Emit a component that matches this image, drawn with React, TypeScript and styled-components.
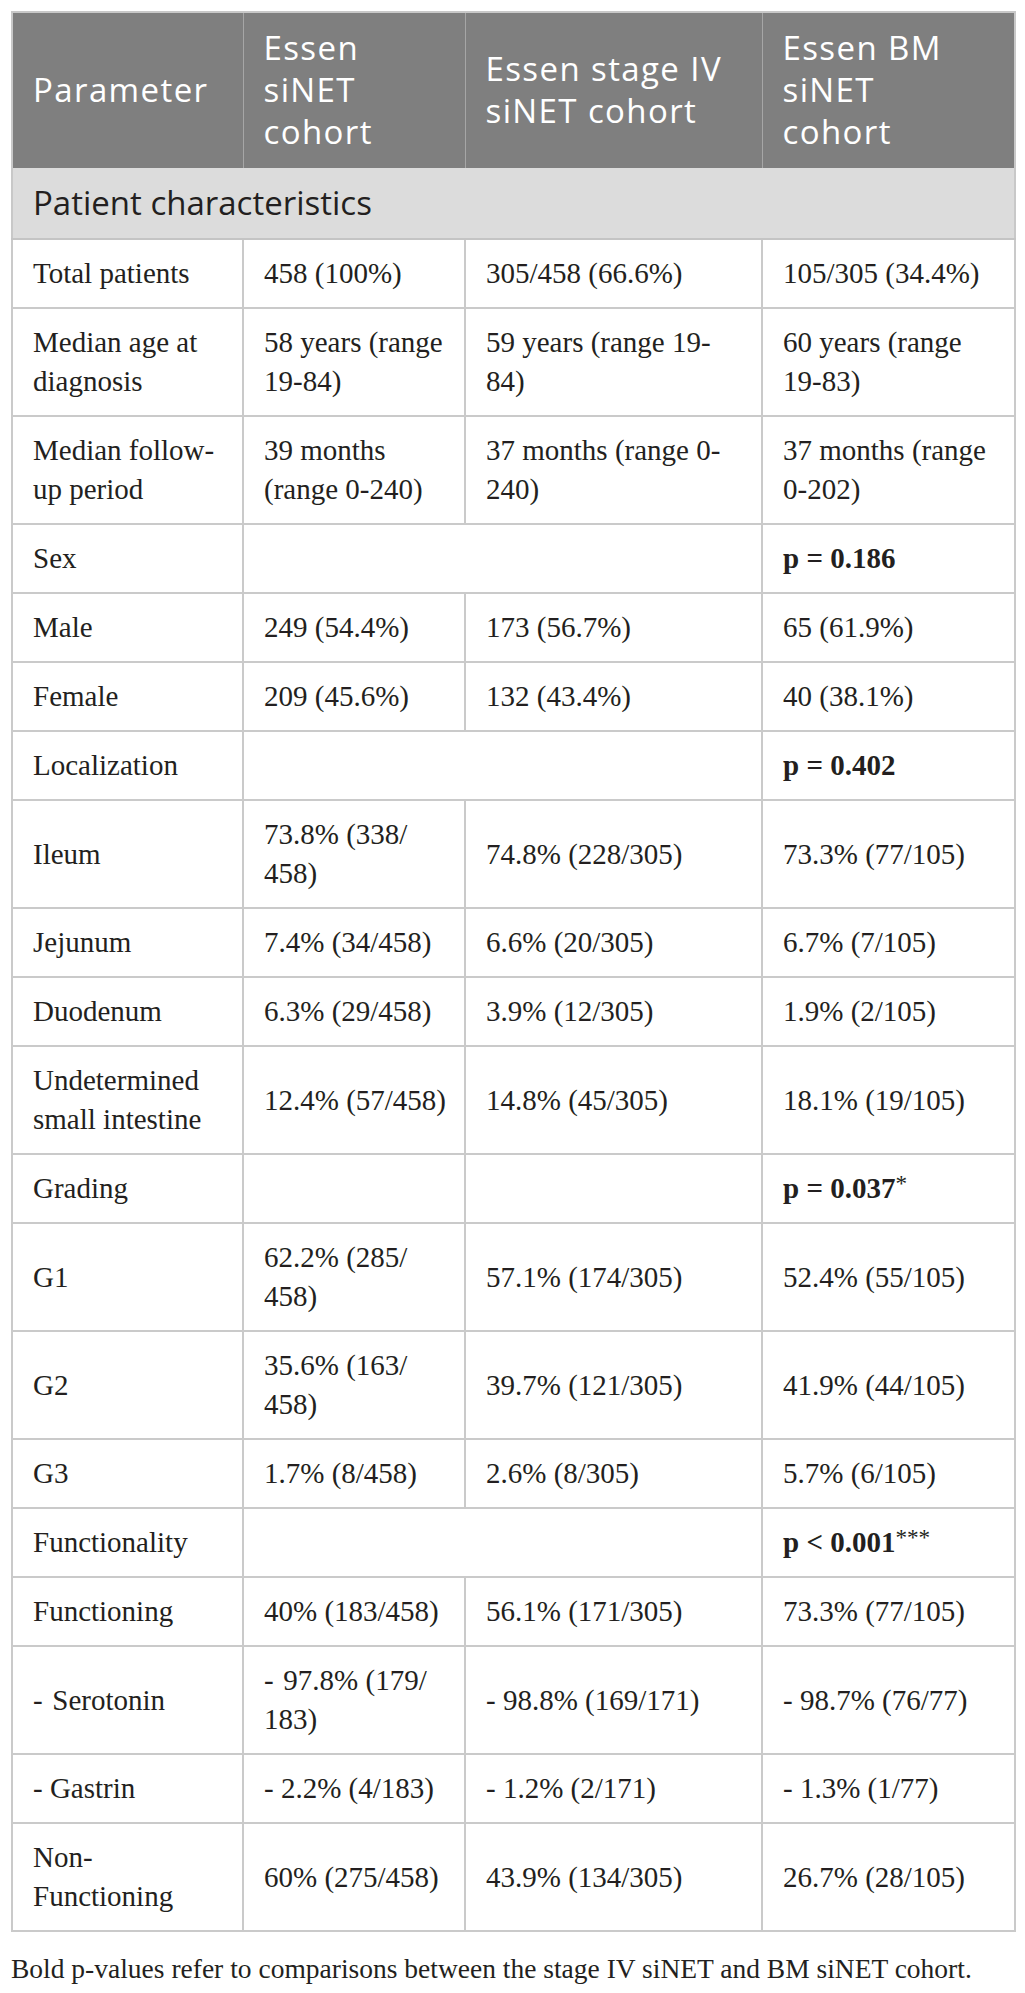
import React from "react"
import styled, { createGlobalStyle } from "styled-components"

type Row =
  | { kind: "data"; label: string; values: [string, string, string] }
  | { kind: "merged"; label: string; p: string; stars?: string }
  | { kind: "split"; label: string; p: string; stars?: string }

const rows: Row[] = [
  { kind: "data", label: "Total patients", values: ["458 (100%)", "305/458 (66.6%)", "105/305 (34.4%)"] },
  {
    kind: "data",
    label: "Median age at\ndiagnosis",
    values: ["58 years (range\n19-84)", "59 years (range 19-\n84)", "60 years (range\n19-83)"],
  },
  {
    kind: "data",
    label: "Median follow-\nup period",
    values: ["39 months\n(range 0-240)", "37 months (range 0-\n240)", "37 months (range\n0-202)"],
  },
  { kind: "merged", label: "Sex", p: "p = 0.186" },
  { kind: "data", label: "Male", values: ["249 (54.4%)", "173 (56.7%)", "65 (61.9%)"] },
  { kind: "data", label: "Female", values: ["209 (45.6%)", "132 (43.4%)", "40 (38.1%)"] },
  { kind: "merged", label: "Localization", p: "p = 0.402" },
  { kind: "data", label: "Ileum", values: ["73.8% (338/\n458)", "74.8% (228/305)", "73.3% (77/105)"] },
  { kind: "data", label: "Jejunum", values: ["7.4% (34/458)", "6.6% (20/305)", "6.7% (7/105)"] },
  { kind: "data", label: "Duodenum", values: ["6.3% (29/458)", "3.9% (12/305)", "1.9% (2/105)"] },
  {
    kind: "data",
    label: "Undetermined\nsmall intestine",
    values: ["12.4% (57/458)", "14.8% (45/305)", "18.1% (19/105)"],
  },
  { kind: "split", label: "Grading", p: "p = 0.037", stars: "*" },
  { kind: "data", label: "G1", values: ["62.2% (285/\n458)", "57.1% (174/305)", "52.4% (55/105)"] },
  { kind: "data", label: "G2", values: ["35.6% (163/\n458)", "39.7% (121/305)", "41.9% (44/105)"] },
  { kind: "data", label: "G3", values: ["1.7% (8/458)", "2.6% (8/305)", "5.7% (6/105)"] },
  { kind: "merged", label: "Functionality", p: "p < 0.001", stars: "***" },
  { kind: "data", label: "Functioning", values: ["40% (183/458)", "56.1% (171/305)", "73.3% (77/105)"] },
  {
    kind: "data",
    label: "-\u200a Serotonin",
    values: ["-\u200a 97.8% (179/\n183)", "- 98.8% (169/171)", "- 98.7% (76/77)"],
  },
  { kind: "data", label: "- Gastrin", values: ["- 2.2% (4/183)", "- 1.2% (2/171)", "- 1.3% (1/77)"] },
  { kind: "data", label: "Non-\nFunctioning", values: ["60% (275/458)", "43.9% (134/305)", "26.7% (28/105)"] },
]

const PValue = ({ p, stars }: { p: string; stars?: string }) => (
  <>
    <Bold>{p}</Bold>
    {stars && <Stars>{stars}</Stars>}
  </>
)

export default function App() {
  return (
    <>
      <GlobalStyle />
      <Page>
        <Table>
          <colgroup>
            <col style={{ width: 231 }} />
            <col style={{ width: 222 }} />
            <col style={{ width: 297 }} />
            <col style={{ width: 253 }} />
          </colgroup>
          <thead>
            <tr>
              <HeadCell>Parameter</HeadCell>
              <HeadCell>{"Essen\nsiNET\ncohort"}</HeadCell>
              <HeadCell>{"Essen stage IV\nsiNET cohort"}</HeadCell>
              <HeadCell>{"Essen BM\nsiNET\ncohort"}</HeadCell>
            </tr>
          </thead>
          <tbody>
            <tr>
              <SectionCell colSpan={4}>Patient characteristics</SectionCell>
            </tr>
            {rows.map((row) => (
              <tr key={row.label}>
                <Cell>{row.label}</Cell>
                {row.kind === "data" &&
                  row.values.map((v, i) => <Cell key={i}>{v}</Cell>)}
                {row.kind === "merged" && (
                  <>
                    <Cell colSpan={2} />
                    <Cell>
                      <PValue p={row.p} stars={row.stars} />
                    </Cell>
                  </>
                )}
                {row.kind === "split" && (
                  <>
                    <Cell />
                    <Cell />
                    <Cell>
                      <PValue p={row.p} stars={row.stars} />
                    </Cell>
                  </>
                )}
              </tr>
            ))}
          </tbody>
        </Table>
        <Caption>
          Bold p-values refer to comparisons between the stage IV siNET and BM siNET cohort.
        </Caption>
      </Page>
    </>
  )
}

const GlobalStyle = createGlobalStyle`
  body {
    margin: 0;
    background: #ffffff;
  }
`

const Page = styled.div`
  padding: 11px;
  color: #231f20;
  font-family: "Liberation Serif", "Times New Roman", serif;
`

const Table = styled.table`
  width: 1003px;
  table-layout: fixed;
  border-collapse: collapse;
  border: 2px solid #c8c8c8;
`

const HeadCell = styled.th`
  background: #7f7f7f;
  color: #ffffff;
  font-family: "Open Sans", "Noto Sans", sans-serif;
  font-weight: 400;
  font-size: 33px;
  letter-spacing: 1.4px;
  line-height: 42px;
  text-align: left;
  vertical-align: middle;
  white-space: pre;
  padding: 14px 20px 15px;
  border-left: 1px solid #a6a6a6;
  border-right: 1px solid #a6a6a6;
  border-top: 2px solid #c8c8c8;
`

const SectionCell = styled.td`
  background: #dcdcdc;
  color: #231f20;
  font-family: "Open Sans", "Noto Sans", sans-serif;
  font-size: 33px;
  line-height: 42px;
  padding: 14px 20px;
  border-bottom: 2px solid #c4c4c4;
`

const Cell = styled.td`
  font-size: 29px;
  line-height: 39px;
  white-space: pre;
  vertical-align: middle;
  padding: 14px 20px;
  border: 2px solid #cacaca;
`

const Bold = styled.span`
  font-weight: 700;
`

const Stars = styled.span`
  font-size: 0.8em;
  vertical-align: 0.3em;
  line-height: 0;
`

const Caption = styled.p`
  margin: 20px 0 0;
  font-size: 27.5px;
  line-height: 34px;
  color: #231f20;
`
